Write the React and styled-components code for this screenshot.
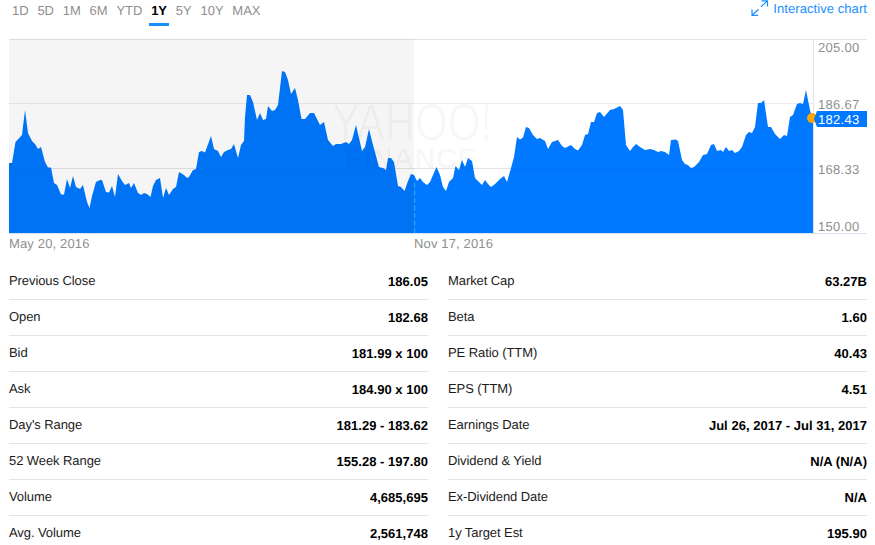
import React from "react";
import styled, { createGlobalStyle } from "styled-components";

const Global = createGlobalStyle`
  html, body { margin: 0; padding: 0; width: 875px; height: 545px; overflow: hidden; background: #fff; }
  body { font-family: "Liberation Sans", Arial, sans-serif; -webkit-font-smoothing: antialiased; text-rendering: geometricPrecision; }
`;

const Page = styled.div`
  width: 875px;
  height: 545px;
  overflow: hidden;
  display: flex;
  flex-direction: column;
  padding: 0 8px 0 9px;
  box-sizing: border-box;
`;
const Toolbar = styled.div`
  height: 39px;
  flex: none;
  display: flex;
  justify-content: space-between;
  align-items: flex-start;
`;
const Tabs = styled.nav`
  display: flex;
  gap: 4.75px;
  margin-left: 1px;
`;
const Tab = styled.span`
  height: 26px;
  padding: 3px 2px 0;
  box-sizing: border-box;
  font-size: 13px;
  line-height: 15px;
  color: ${(p) => (p.$active ? "#000" : "#8f8f8f")};
  font-weight: ${(p) => (p.$active ? 700 : 400)};
  border-bottom: 3px solid ${(p) => (p.$active ? "#188fff" : "transparent")};
`;
const ChartLink = styled.a`
  display: flex;
  align-items: flex-start;
  gap: 4px;
  color: #188fff;
  font-size: 13px;
  line-height: 17px;
  letter-spacing: 0.07px;
`;
const LinkIcon = styled.svg`
  width: 18px;
  height: 17px;
  display: block;
`;
const ChartSvg = styled.svg`
  width: 858px;
  height: 225px;
  display: block;
  flex: none;
`;
const Stats = styled.section`
  flex: none;
  display: grid;
  grid-template-columns: 419px 419px;
  column-gap: 20px;
  align-items: start;
`;
const Column = styled.div`
  display: flex;
  flex-direction: column;
`;
const Row = styled.div`
  height: 36px;
  flex: none;
  box-sizing: border-box;
  display: flex;
  justify-content: space-between;
  align-items: center;
  font-size: 13px;
  padding-bottom: 3px;
  color: #000;
  border-bottom: 1px solid #e3e5e8;
`;
const Label = styled.span`
  color: #1c1c1c;
  letter-spacing: -0.08px;
`;
const Value = styled.span`
  font-weight: 700;
  letter-spacing: 0.02px;
  position: relative;
  top: 1px;
`;

const pts = [
[9,163],[12,163],[15.5,142],[22,135],[25,110],[28,133],[32,141],[35,144],[38,149],[41,147],[45,162],[48,167.5],[51,167.5],[54,183],[57,185],[61,194.6],[64,194.6],[67,179],[70,188],[73,176],[76,187],[80,189],[83,185],[87,202],[89.5,208],[92,196],[96,182],[100,180],[102,180],[106,192],[109,192.6],[112,186],[115,197],[118,174],[122,181],[125,185],[129,183],[131,188],[134,183],[138,193],[141,195],[144,193],[147,194],[150.5,197],[153,186],[156,180],[160,178],[163,198],[166,188],[169,195],[173,189],[176,187],[179,172],[184,175],[187,178],[189,177],[193,170],[196,169],[199,152],[202,151],[205,152.5],[211,136],[214,149],[218,151],[221,157],[224,152],[228,150],[231,149],[234,144],[238,158],[241,145],[244,141],[245,117],[247,95],[250,95],[253,102],[257,120],[260,113],[263,120],[266,119],[268,106],[272,111],[275,110],[278,105],[282,71],[285,72],[288,80],[291,94],[295,88],[298,100],[301.5,119],[305,119],[310,113],[314,113],[320,125],[324,122],[328,140],[333,146],[336,144],[341,144],[346,142],[349,144],[352,140],[356,125],[362,151],[365,147],[369,129],[373,145],[379,167],[383,168],[386,170],[388,158],[391,158],[394,162],[398,186],[401,187],[404.5,191],[408,181],[411,174],[414,175],[417,181],[420,178],[423,182],[427,185],[430,182],[433,175],[436.5,167],[440,175],[443,187],[446,191],[449,182],[453,178],[455.5,166],[459,170],[462,160],[465,167],[468,158],[472,161],[475,178],[479,182],[482,185],[485,180],[488,184],[491,187],[495,184],[500,179],[504,176],[507,182],[511,168],[514,157],[517,137],[520,139.5],[523,137.5],[526,127],[529,128],[533,135],[537,139],[540,138],[545,141],[548,149],[552,142],[558,140],[562,146],[565,148],[571,145],[575,149],[578,150.5],[582,145],[585,135],[588,134],[591,122],[594,122],[597,113],[600,112],[604,117],[610,110],[614,109],[620,106],[623,110],[626,145],[630,151],[633,147],[636,144],[640,147],[645,150],[650,149],[654,150],[658,152],[661,151],[665,152],[669,155],[671,140],[676,139.5],[678,141],[682,160],[685,164],[688,165],[691,168],[694,167],[699,162],[703,155],[707,154],[711,145],[714,144],[717,151],[721,150],[723,152],[726,147],[729,151],[732,150],[735,153],[739,151],[742,147],[746,135],[749,132],[752,133],[755,127],[758,103],[761,103],[764,100],[768,127],[771,127],[775,134],[780,139],[784,135],[787,136],[790,117],[793,115],[797,104],[800,103],[803,104],[806,90],[810,110],[813,121]
];
const area = "M9 233 L" + pts.map((p) => p.join(" ")).join(" L") + " L813 233 Z";

const left = [
  ["Previous Close", "186.05"], ["Open", "182.68"], ["Bid", "181.99 x 100"], ["Ask", "184.90 x 100"],
  ["Day's Range", "181.29 - 183.62"], ["52 Week Range", "155.28 - 197.80"], ["Volume", "4,685,695"], ["Avg. Volume", "2,561,748"],
];
const right = [
  ["Market Cap", "63.27B"], ["Beta", "1.60"], ["PE Ratio (TTM)", "40.43"], ["EPS (TTM)", "4.51"],
  ["Earnings Date", "Jul 26, 2017 - Jul 31, 2017"], ["Dividend & Yield", "N/A (N/A)"], ["Ex-Dividend Date", "N/A"], ["1y Target Est", "195.90"],
];
const tabs = ["1D", "5D", "1M", "6M", "YTD", "1Y", "5Y", "10Y", "MAX"];
const font = '"Liberation Sans", Arial, sans-serif';

function Chart() {
  return (
    <ChartSvg viewBox="9 39 858 225">
      <line x1="9" x2="867" y1="39.5" y2="39.5" stroke="#e3e5e8" />
      <line x1="9" x2="813" y1="103.5" y2="103.5" stroke="#ebebeb" />
      <line x1="9" x2="813" y1="168.5" y2="168.5" stroke="#ebebeb" />
      <path d={area} fill="#0078ff" />
      <rect x="9" y="39" width="405" height="194" fill="#000" fillOpacity="0.04" />
      <line x1="9" x2="813" y1="168.5" y2="168.5" stroke="#000" strokeOpacity="0.03" />
      <g fontFamily={font} fill="#000" fillOpacity="0.03" textAnchor="middle">
        <text x="412" y="140" fontSize="52" textLength="160" lengthAdjust="spacingAndGlyphs">YAHOO!</text>
        <text x="411" y="168" fontSize="28" fontWeight="700" textLength="132" lengthAdjust="spacingAndGlyphs">FINANCE</text>
      </g>
      <line x1="414.5" x2="414.5" y1="183" y2="233" stroke="#2b9ef7" strokeWidth="1.5" strokeDasharray="5 2.5" />
      <line x1="9" x2="867" y1="233.5" y2="233.5" stroke="#d9e2ee" />
      <line x1="813.5" x2="813.5" y1="39" y2="233" stroke="#e3e5e8" />
      <g fontFamily={font} fontSize="13" fill="#8f8f8f" letterSpacing="0.3">
        <text x="818" y="52">205.00</text>
        <text x="818" y="109">186.67</text>
        <text x="818" y="174">168.33</text>
        <text x="818" y="231">150.00</text>
      </g>
      <g fontFamily={font} fontSize="13" fill="#8f8f8f" letterSpacing="0.15">
        <text x="9" y="248">May 20, 2016</text>
        <text x="414" y="248">Nov 17, 2016</text>
      </g>
      <circle cx="812" cy="118" r="5" fill="#ffa700" />
      <path d="M817 111 H867 V127 H817 L814 119 Z" fill="#0078ff" />
      <text x="818" y="124" fontFamily={font} fontSize="13" fill="#fff" letterSpacing="0.3">182.43</text>
    </ChartSvg>
  );
}

export default function App() {
  return (
    <>
      <Global />
      <Page>
        <Toolbar>
          <Tabs>
            {tabs.map((t) => (
              <Tab key={t} $active={t === "1Y"}>{t}</Tab>
            ))}
          </Tabs>
          <ChartLink>
            <LinkIcon viewBox="0 0 18 17" fill="none" stroke="#188fff" strokeWidth="1.2">
              <path d="M1 15.3 L7.5 9.5 M1 9.5 V15.3 H7" />
              <path d="M16.5 0.9 L10 6.7 M10.5 0.9 H16.5 V6.5" />
            </LinkIcon>
            Interactive chart
          </ChartLink>
        </Toolbar>
        <Chart />
        <Stats>
          {[left, right].map((col, i) => (
            <Column key={i}>
              {col.map(([k, v]) => (
                <Row key={k}>
                  <Label>{k}</Label>
                  <Value>{v}</Value>
                </Row>
              ))}
            </Column>
          ))}
        </Stats>
      </Page>
    </>
  );
}
